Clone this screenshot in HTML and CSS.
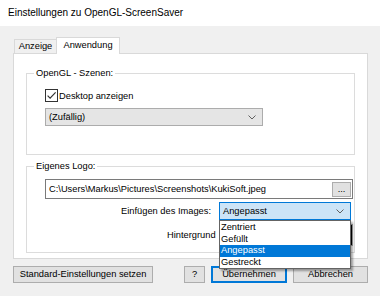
FILE: index.html
```html
<!DOCTYPE html>
<html lang="de">
<head>
  <meta charset="UTF-8" />
  <title>Einstellungen zu OpenGL-ScreenSaver</title>
  <link rel="stylesheet" href="styles.css">
</head>
<body>
  <div class="titlebar">Einstellungen zu OpenGL-ScreenSaver</div>
  <div class="client">
    <div class="tabs">
      <div class="tab">Anzeige</div>
      <div class="tab active">Anwendung</div>
    </div>

    <div class="panel">
      <fieldset class="group">
        <legend>OpenGL - Szenen:</legend>
        <div class="group-body scenes">
          <label class="check">
            <svg class="checkbox" width="13" height="13" viewBox="0 0 13 13">
              <rect x="0.5" y="0.5" width="12" height="12" fill="#fff" stroke="#333" />
              <path d="M2.6 6.6 L5.1 9.1 L10.6 3.4" fill="none" stroke="#333" stroke-width="1.2" />
            </svg>
            Desktop anzeigen
          </label>
          <div class="combo combo-scene">
            <span>(Zufällig)</span>
            <svg class="chevron" width="8" height="5" viewBox="0 0 8 5"><polyline points="0.5,0.5 4,4 7.5,0.5" fill="none" stroke="#606060" /></svg>
          </div>
        </div>
      </fieldset>

      <fieldset class="group logo">
        <legend>Eigenes Logo:</legend>
        <div class="group-body">
          <div class="path">
            <span>C:\Users\Markus\Pictures\Screenshots\KukiSoft.jpeg</span>
            <span class="browse">...</span>
          </div>
          <div class="row insert">
            <span>Einfügen des Images:</span>
            <div class="combo combo-open">
              <span>Angepasst</span>
              <svg class="chevron" width="8" height="5" viewBox="0 0 8 5"><polyline points="0.5,0.5 4,4 7.5,0.5" fill="none" stroke="#606060" /></svg>
              <ul class="dropdown">
                <li>Zentriert</li>
                <li>Gefüllt</li>
                <li class="selected">Angepasst</li>
                <li>Gestreckt</li>
              </ul>
            </div>
          </div>
          <div class="row background">
            <span>Hintergrund</span>
            <div class="swatch"></div>
          </div>
        </div>
      </fieldset>
    </div>

    <div class="buttons">
      <div class="button wide">Standard-Einstellungen setzen</div>
      <div class="button help">?</div>
      <div class="button default">Übernehmen</div>
      <div class="button cancel">Abbrechen</div>
    </div>
  </div>
</body>
</html>
```

FILE: styles.css
```css
* {
  margin: 0;
  padding: 0;
  box-sizing: border-box;
}

body {
  width: 380px;
  height: 296px;
  overflow: hidden;
  background: #f0f0f0;
  font-family: "Liberation Sans", Arial, sans-serif;
  font-size: 9.3px;
  color: #000;
}

.titlebar {
  height: 26px;
  background: #fff;
  padding-left: 8px;
  font-size: 10px;
  line-height: 26px;
}

.client {
  padding: 11px 13px 0 13px;
}

/* tab strip */
.tabs {
  display: flex;
  align-items: flex-end;
  height: 16px;
  padding-left: 1px;
}

.tab {
  width: 43px;
  height: 14px;
  border: 1px solid #d9d9d9;
  border-bottom: none;
  text-align: center;
  line-height: 13px;
}

.tab.active {
  position: relative;
  z-index: 1;
  width: 64px;
  height: 17px;
  margin-left: -1px;
  margin-bottom: -1px;
  background: #fff;
  line-height: 15px;
}

.panel {
  width: 355px;
  height: 206px;
  background: #fff;
  border: 1px solid #d9d9d9;
  padding-top: 13px;
}

/* group boxes */
.group {
  width: 329px;
  margin-left: 12px;
  border: 1px solid #dcdcdc;
  padding: 0;
}

.group legend {
  margin-left: 7px;
  padding: 0 2px;
  line-height: 12px;
}

.group.logo {
  margin-top: 5px;
}

.group-body {
  padding: 10px 0 28px 18px;
}

.logo .group-body {
  padding: 7px 0 6px 18px;
}

.check {
  display: flex;
  align-items: center;
  gap: 1px;
  height: 13px;
}

.checkbox {
  display: block;
}

.combo {
  position: relative;
  display: flex;
  align-items: center;
  justify-content: space-between;
  height: 18px;
  padding: 0 6px 0 3px;
  background: #e5e5e5;
  border: 1px solid #acacac;
}

.combo-scene {
  width: 218px;
  margin-top: 6px;
}

.chevron {
  display: block;
}

/* file path field */
.path {
  display: flex;
  align-items: center;
  justify-content: space-between;
  width: 308px;
  height: 20px;
  padding: 0 1px 0 3px;
  border: 1px solid #7a7a7a;
}

.browse {
  width: 19px;
  height: 15px;
  background: #e1e1e1;
  border: 1px solid #adadad;
  text-align: center;
  line-height: 12px;
}

.row {
  display: flex;
  align-items: center;
  width: 308px;
}

.insert {
  justify-content: flex-end;
  gap: 8px;
  margin-top: 3px;
  padding-right: 2px;
}

.combo-open {
  width: 132px;
  background: #cce4f7;
  border-color: #0078d7;
}

.dropdown {
  position: absolute;
  z-index: 2;
  top: 17px;
  left: -1px;
  width: 132px;
  list-style: none;
  background: #fff;
  border: 1px solid #646464;
  padding-top: 1px;
  box-shadow: 2px 2px 2px rgba(0, 0, 0, 0.35);
}

.dropdown li {
  height: 11.5px;
  line-height: 11.5px;
  padding-left: 1px;
}

.dropdown li.selected {
  background: #0078d7;
  color: #fff;
}

.background {
  height: 22px;
  margin-top: 4px;
  padding-left: 122px;
}

.swatch {
  width: 52px;
  height: 22px;
  margin-left: auto;
  background: #000;
  border: 1px solid #adadad;
}

/* bottom buttons */
.buttons {
  display: flex;
  gap: 6px;
  margin-top: 7px;
  width: 355px;
}

.button {
  height: 17px;
  background: #e1e1e1;
  border: 1px solid #adadad;
  text-align: center;
  line-height: 15px;
}

.wide {
  width: 140px;
}

.help {
  width: 21px;
  margin-left: auto;
}

.default {
  width: 76px;
  border-color: #0078d7;
  box-shadow: inset 0 0 0 1px #0078d7;
}

.cancel {
  width: 75px;
}
```
